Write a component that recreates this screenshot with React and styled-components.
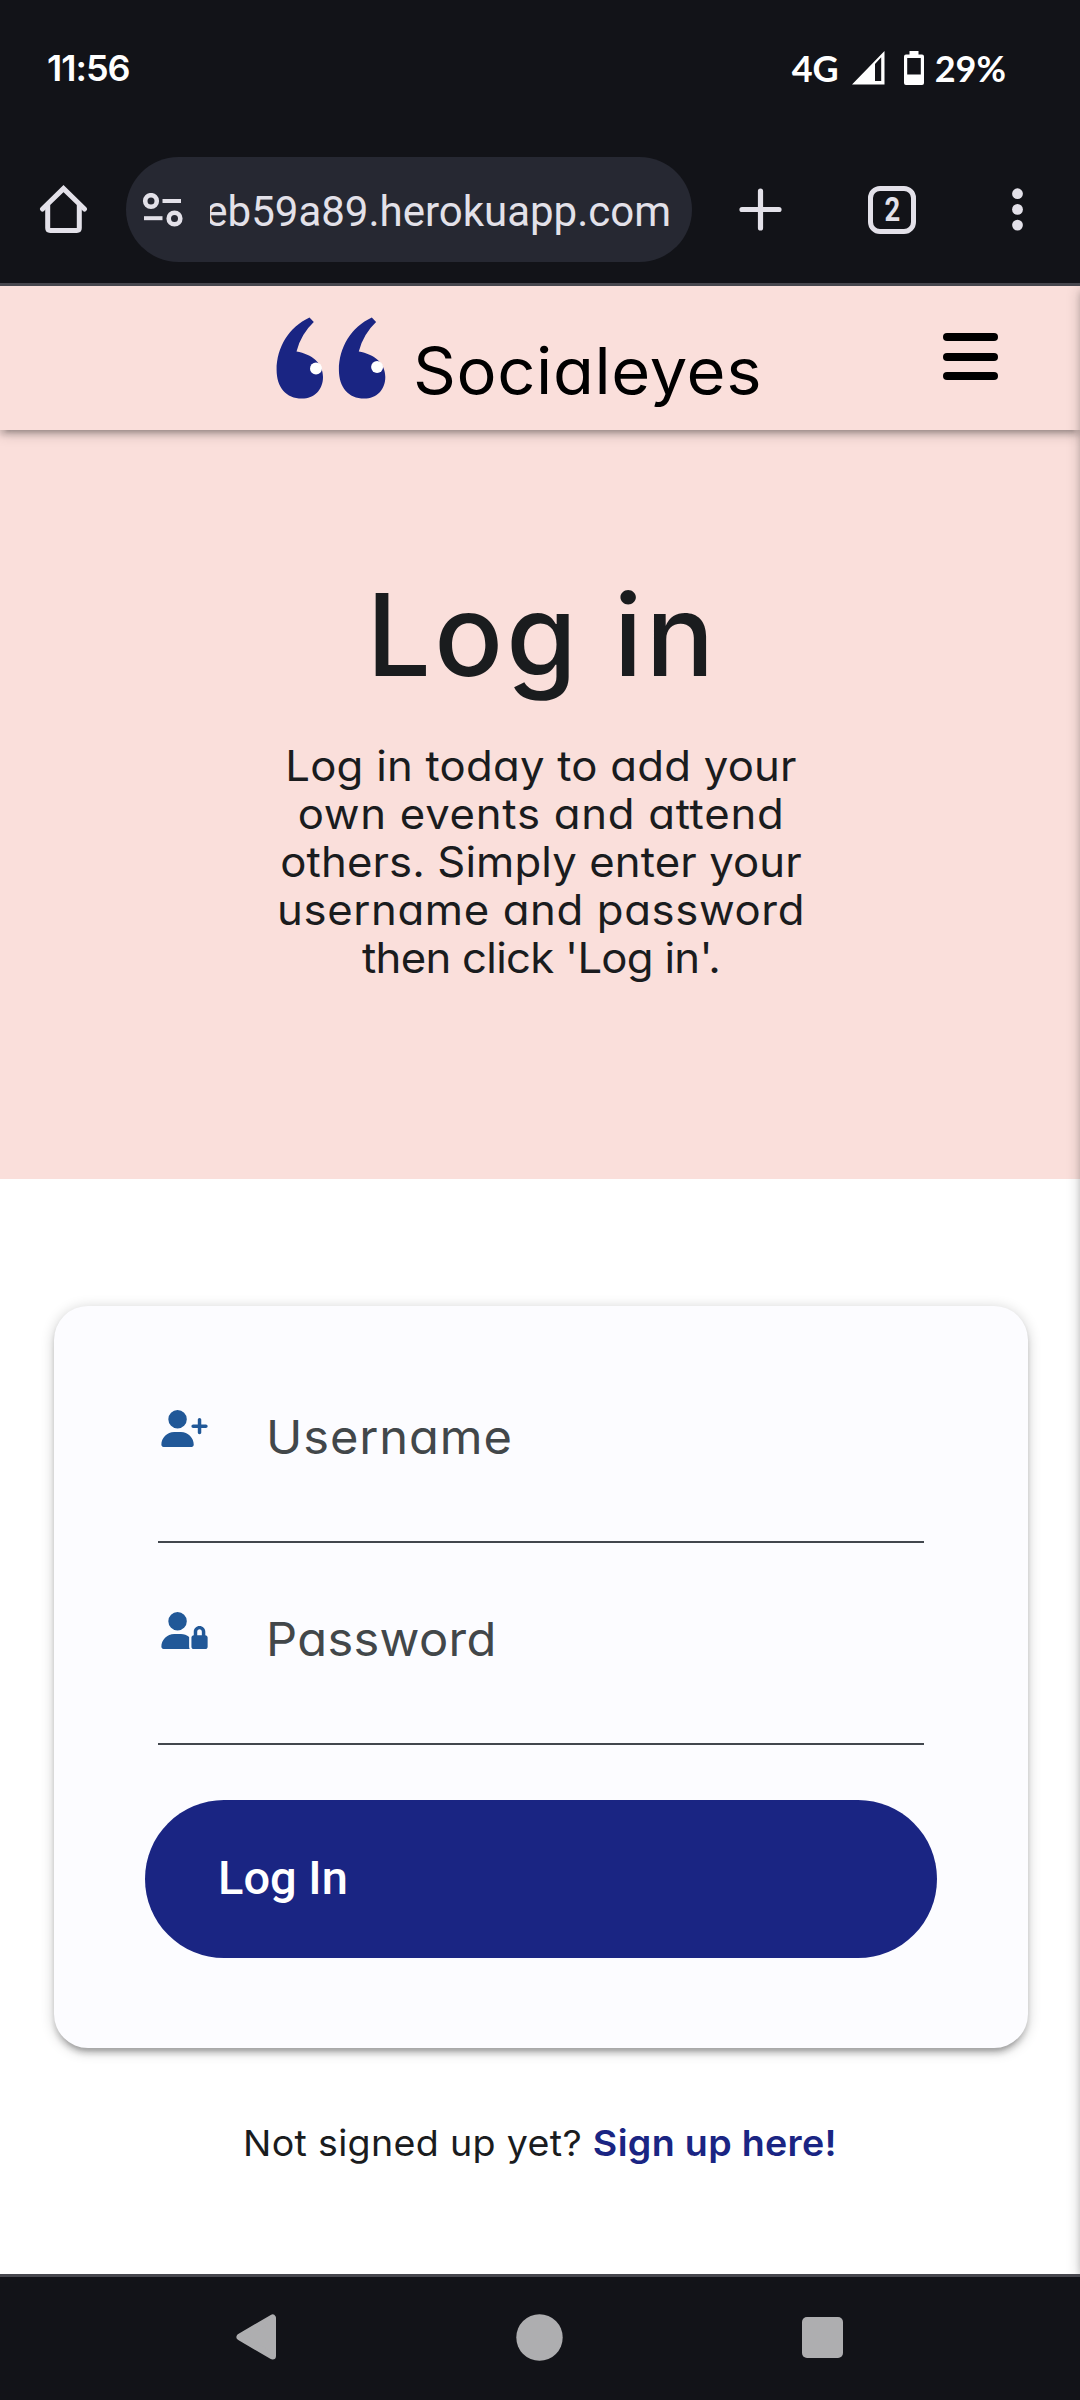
import React from "react";
import styled, { createGlobalStyle } from "styled-components";
import { FaUserPlus, FaUserLock } from "react-icons/fa6";

const elevation = `
  0 5.5px 5.5px 0 rgba(0, 0, 0, 0.14),
  0 8.25px 2.75px -5.5px rgba(0, 0, 0, 0.12),
  0 2.75px 13.75px 0 rgba(0, 0, 0, 0.2)`;

const GlobalStyle = createGlobalStyle`
  *, *::before, *::after { box-sizing: border-box; }
  body {
    margin: 0;
    background: #fff;
    font-family: Inter, "Open Sans", sans-serif;
    font-feature-settings: "cv11";
  }
`;

const Screen = styled.div`
  display: flex;
  flex-direction: column;
  width: 1080px;
  height: 2400px;
  overflow: hidden;
`;

const StatusBar = styled.div`
  display: flex;
  align-items: center;
  height: 136px;
  padding: 0 74px 0 47px;
  background: #121318;
  color: #fff;
`;

const Clock = styled.span`
  margin-right: auto;
  font-size: 36px;
  font-weight: 560;
  letter-spacing: -1px;
`;

const StatusText = styled.span`
  font-family: Lato, sans-serif;
  font-size: 36px;
  font-weight: 700;
  line-height: 40px;
`;

const SignalIcon = styled.svg`
  margin: 0 19px 0 13px;
`;

const BatteryIcon = styled.svg`
  margin-right: 11px;
`;

const Toolbar = styled.div`
  display: flex;
  align-items: center;
  height: 150px;
  padding: 0 57px 0 39px;
  background: #121318;
  border-bottom: 3px solid #47474e;
  color: #e3e1e9;
`;

const AddressBar = styled.div`
  display: flex;
  align-items: center;
  width: 566px;
  height: 105px;
  margin: 0 47px 0 38px;
  padding: 0 21px 0 16px;
  border-radius: 53px;
  background: #262832;
`;

const AddressText = styled.div`
  display: flex;
  justify-content: flex-end;
  flex: 1;
  margin-left: 27px;
  padding-top: 4px;
  overflow: hidden;
  white-space: nowrap;
  font-family: Roboto, sans-serif;
  font-size: 42px;
  line-height: 60px;
`;

const TabCount = styled.div`
  display: flex;
  align-items: center;
  justify-content: center;
  width: 48px;
  height: 48px;
  margin: 0 96px 0 86px;
  border: 5px solid #e3e1e9;
  border-radius: 12px;
  font-family: Roboto, sans-serif;
  font-size: 33px;
  font-weight: 700;
  line-height: 36px;
`;

const TabDigit = styled.span`
  transform: scaleX(0.83);
`;

const WebPage = styled.div`
  position: relative;
  display: flex;
  flex-direction: column;
  height: 1988px;
  overflow: hidden;
  background: #fff;
`;

const SiteHeader = styled.header`
  position: relative;
  display: flex;
  align-items: center;
  height: 144px;
  padding: 0 82px 0 276px;
  background: #fadfdb;
  box-shadow: ${elevation};
`;

const BrandName = styled.span`
  margin-left: 27px;
  padding-top: 25px;
  color: #000;
  font-size: 64px;
  line-height: 72px;
  letter-spacing: 0.6px;
  transform: scaleX(1.045);
  transform-origin: left;
`;

const MenuButton = styled.div`
  display: flex;
  flex-direction: column;
  gap: 11.5px;
  width: 55px;
  margin: 0 0 3px auto;
`;

const MenuBar = styled.span`
  height: 8px;
  border-radius: 4px;
  background: #000;
`;

const Hero = styled.section`
  height: 749px;
  padding-top: 145px;
  background: #fadfdb;
  color: #1a1c1e;
  text-align: center;
`;

const Title = styled.h1`
  margin: 0 0 47px;
  font-size: 114px;
  font-weight: 470;
  line-height: 120px;
  letter-spacing: 3.2px;
  padding-left: 4px;
`;

const Intro = styled.p`
  margin: 0;
  padding-left: 2px;
  font-size: 42px;
  line-height: 48.1px;
  transform: scaleX(1.04);
`;

const IntroLine = styled.span`
  display: block;
  letter-spacing: ${(p) => p.$spacing}px;
`;

const Card = styled.form`
  height: 742px;
  margin: 127px 52px 0 54px;
  padding: 35px 104px 0;
  border-radius: 34px;
  background: #fcfcff;
  box-shadow: ${elevation};
`;

const Field = styled.label`
  display: flex;
  align-items: flex-start;
  height: 202px;
  padding: 68px 0 0 3px;
  border-bottom: 2px solid #42474e;
`;

const FieldIcon = styled.span`
  display: flex;
  margin-top: 1px;
  color: #215898;

  svg {
    width: 47px;
    height: 37px;
  }
`;

const FieldLabel = styled.span`
  margin-left: 58px;
  color: #42474a;
  font-size: 46.5px;
  line-height: 56px;
  letter-spacing: ${(p) => p.$spacing}px;
  transform: scaleX(1.05);
  transform-origin: left;
`;

const SubmitButton = styled.button`
  display: block;
  width: 792px;
  height: 158px;
  margin: 55px -13px 0;
  padding: 0 73px 3px;
  border: 0;
  border-radius: 79px;
  background: #1a2583;
  color: #fff;
  font-family: Roboto, sans-serif;
  font-size: 47px;
  font-weight: 500;
  text-align: left;
`;

const SignUpHint = styled.p`
  margin: 68px 0 0;
  color: #1a1c1e;
  font-size: 36px;
  line-height: 54px;
  letter-spacing: 0.3px;
  text-align: center;
  transform: scaleX(1.045);
`;

const SignUpLink = styled.a`
  color: #1a2583;
  font-weight: 560;
`;

const SideNavPanel = styled.div`
  position: absolute;
  top: 0;
  left: 100%;
  width: 300px;
  height: 100%;
  box-shadow: ${elevation};
`;

const NavigationBar = styled.nav`
  display: flex;
  align-items: center;
  justify-content: space-between;
  height: 126px;
  padding: 0 237px 3px 236px;
  border-top: 3px solid #47474e;
  background: #121318;
`;

const Quote = ({ x, eyeX, eyeY }) => (
  <g transform={`translate(${x} 0)`}>
    <path
      d="M33.5 0.4 L37.8 5 Q25 17 20.5 34.4 C36 37 47 46 47 60 C47 73 38 81.6 26 81.6 C10 81.6 0.6 70 0.6 53 C0.6 30 13 10 33.5 0.4Z"
      fill="#1a2583"
    />
    <circle cx={eyeX} cy={eyeY} r="6" fill="#fff" />
  </g>
);

const fields = [
  { label: "Username", Icon: FaUserPlus, spacing: 0.85 },
  { label: "Password", Icon: FaUserLock, spacing: 0.3 },
];

const introLines = [
  ["Log in today to add your", 0.22],
  ["own events and attend", 0.7],
  ["others. Simply enter your", 0.1],
  ["username and password", 0.6],
  ["then click 'Log in'.", -0.7],
];

export default function App() {
  return (
    <Screen>
      <GlobalStyle />
      <StatusBar>
        <Clock>11:56</Clock>
        <StatusText>4G</StatusText>
        <SignalIcon width="33" height="34" viewBox="0 0 33 34">
          <path
            fill="#fff"
            fillRule="evenodd"
            d="M32.5 0 V33.5 H0 Z M23 13 V30 H29.2 V6.2 Z"
          />
        </SignalIcon>
        <BatteryIcon width="20" height="34" viewBox="0 0 20 34">
          <path
            fill="#fff"
            fillRule="evenodd"
            d="M5.5 0 H14.5 V3.5 H18 Q20 3.5 20 5.5 V32 Q20 34 18 34 H2 Q0 34 0 32 V5.5 Q0 3.5 2 3.5 H5.5 Z M3.2 7 V23.5 H16.8 V7 Z"
          />
        </BatteryIcon>
        <StatusText>29%</StatusText>
      </StatusBar>

      <Toolbar>
        <svg width="49" height="49" viewBox="0 0 49 49" fill="none" stroke="#e3e1e9" strokeWidth="5">
          <path d="M3.5 24 L24.5 3.6 L45.5 24" strokeLinecap="round" />
          <path d="M8.7 20 V43 Q8.7 45.4 11.2 45.4 H37.8 Q40.3 45.4 40.3 43 V20" />
        </svg>
        <AddressBar>
          <svg width="41" height="34" viewBox="0 0 41 34" fill="none" stroke="#e3e1e9" strokeWidth="4.6">
            <circle cx="9" cy="8" r="5.8" />
            <path d="M20.5 8 H39" strokeWidth="4" />
            <path d="M2 25.2 H20.5" strokeWidth="4" />
            <circle cx="32.5" cy="25.5" r="5.8" />
          </svg>
          <AddressText>
            <span>eb59a89.herokuapp.com</span>
          </AddressText>
        </AddressBar>
        <svg width="43" height="43" viewBox="0 0 43 43" stroke="#e3e1e9" strokeWidth="5.2" strokeLinecap="round">
          <path d="M21.5 3 V40 M3 21.5 H40" />
        </svg>
        <TabCount>
          <TabDigit>2</TabDigit>
        </TabCount>
        <svg width="11" height="43" viewBox="0 0 11 43" fill="#e3e1e9">
          <circle cx="5.5" cy="5.7" r="5.4" />
          <circle cx="5.5" cy="21.4" r="5.4" />
          <circle cx="5.5" cy="37.1" r="5.4" />
        </svg>
      </Toolbar>

      <WebPage>
        <SiteHeader>
          <svg width="110" height="82" viewBox="0 0 110 82">
            <Quote x={0} eyeX={40} eyeY={51.5} />
            <Quote x={62.3} eyeX={38.8} eyeY={50} />
          </svg>
          <BrandName>Socialeyes</BrandName>
          <MenuButton>
            <MenuBar />
            <MenuBar />
            <MenuBar />
          </MenuButton>
        </SiteHeader>

        <Hero>
          <Title>Log in</Title>
          <Intro>
            {introLines.map(([text, spacing]) => (
              <IntroLine key={text} $spacing={spacing}>
                {text}
              </IntroLine>
            ))}
          </Intro>
        </Hero>

        <Card>
          {fields.map(({ label, Icon, spacing }) => (
            <Field key={label}>
              <FieldIcon>
                <Icon />
              </FieldIcon>
              <FieldLabel $spacing={spacing}>{label}</FieldLabel>
            </Field>
          ))}
          <SubmitButton type="button">Log In</SubmitButton>
        </Card>

        <SignUpHint>
          Not signed up yet? <SignUpLink>Sign up here!</SignUpLink>
        </SignUpHint>
        <SideNavPanel />
      </WebPage>

      <NavigationBar>
        <svg width="41" height="46" viewBox="0 0 41 46">
          <path
            d="M4 23 L36.5 4 V42 Z"
            fill="#aeaeb0"
            stroke="#aeaeb0"
            strokeWidth="7"
            strokeLinejoin="round"
          />
        </svg>
        <svg width="47" height="47" viewBox="0 0 47 47">
          <circle cx="23.5" cy="23.5" r="23.2" fill="#aeaeb0" />
        </svg>
        <svg width="41" height="41" viewBox="0 0 41 41">
          <rect width="41" height="41" rx="5" fill="#aeaeb0" />
        </svg>
      </NavigationBar>
    </Screen>
  );
}
